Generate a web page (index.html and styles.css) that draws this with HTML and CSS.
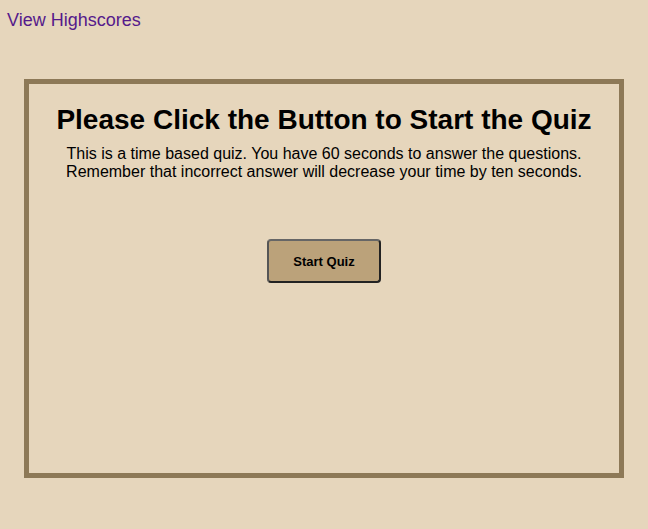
FILE: index.html
```html
<!DOCTYPE html>
<html>
<head>
<meta charset="utf-8">
<link rel="stylesheet" href="styles.css">
</head>
<body>
<header class="top">
  <a class="scores" href="#">View Highscores</a>
</header>
<main class="quiz">
  <h1 class="title">Please Click the Button to Start the Quiz</h1>
  <p class="intro">This is a time based quiz. You have 60 seconds to answer the questions.<br>Remember that incorrect answer will decrease your time by ten seconds.</p>
  <button class="start">Start Quiz</button>
</main>
</body>
</html>
```
FILE: styles.css
```css
html, body {
  background: #e6d6bc;
}
body {
  margin: 0;
  padding: 8px;
  font-family: "Liberation Sans", Arial, sans-serif;
  color: #000;
}
.top {
  height: 21px;
  padding-top: 2px;
}
.scores {
  display: block;
  margin-left: -1px;
  font-size: 18px;
  color: #551a8b;
  text-decoration: none;
}
.quiz {
  box-sizing: border-box;
  width: 600px;
  height: 399px;
  margin: 48px auto 0;
  border: 5px solid #8d7957;
  display: flex;
  flex-direction: column;
  align-items: center;
}
.title {
  margin: 20px 0 0;
  font-size: 28px;
  font-weight: bold;
  text-align: center;
}
.intro {
  margin: 9px 0 0;
  font-size: 16px;
  line-height: 18px;
  text-align: center;
}
.start {
  margin-top: 58px;
  width: 114px;
  height: 44px;
  background: #bba27a;
  border: 2px solid #222;
  border-top-color: #666;
  border-left-color: #555;
  border-radius: 4px;
  font-family: "Liberation Sans", Arial, sans-serif;
  font-size: 13px;
  font-weight: bold;
  color: #000;
}
```
